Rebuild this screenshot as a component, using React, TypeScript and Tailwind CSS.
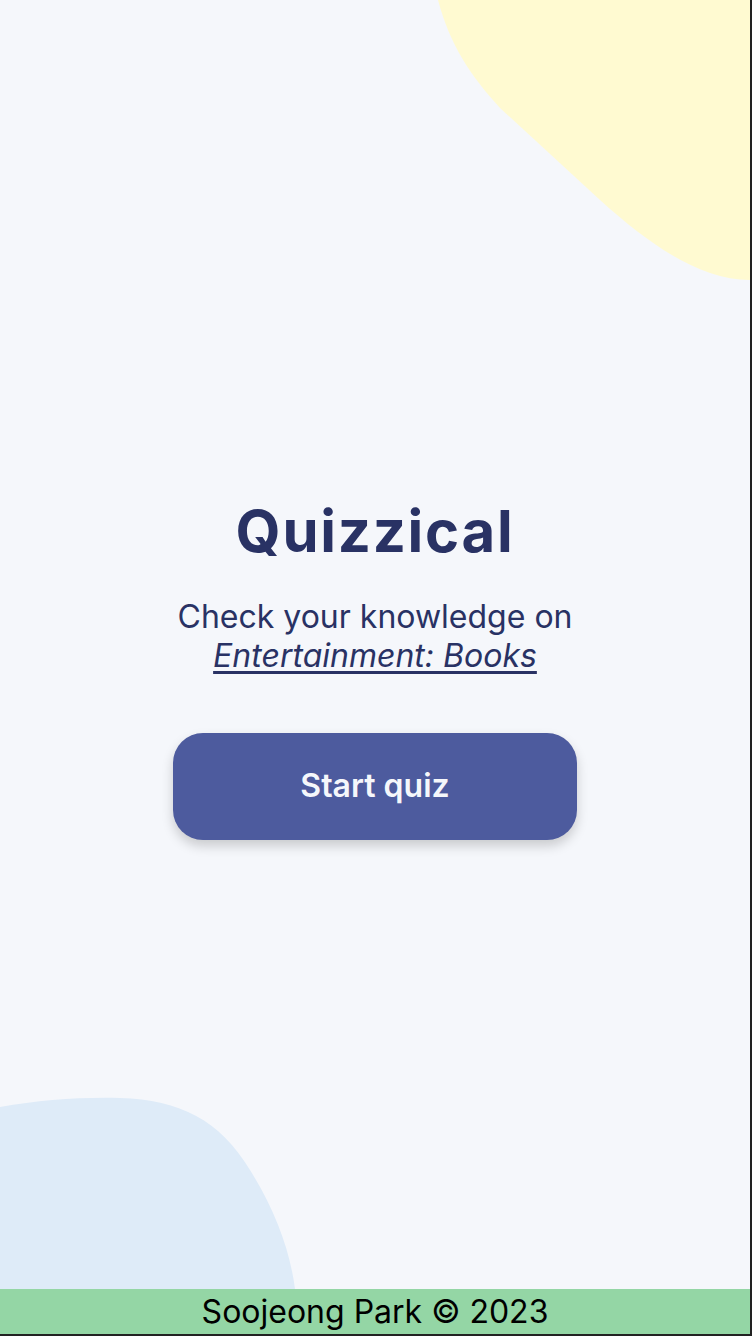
export default function App() {
  return (
    <div className="relative flex h-[1336px] w-[752px] flex-col overflow-hidden border-r-2 border-b-2 border-[#222222] bg-[#F5F7FB] font-['Inter',sans-serif]">
      {/* decorative blobs */}
      <svg
        className="pointer-events-none absolute left-0 top-0"
        width="750"
        height="1289"
        viewBox="0 0 750 1289"
      >
        <path
          d="M438 0 C450 45 470 75 500 108 L600 200 C650 245 700 280 750 280 L750 0 Z"
          fill="#FFFAD1"
        />
        <path
          d="M0 1107 C40 1100 80 1097 120 1098 C180 1100 220 1120 250 1170 C275 1210 290 1250 295 1289 L0 1289 Z"
          fill="#DEEBF8"
        />
      </svg>

      <main className="relative flex flex-1 flex-col items-center justify-center pt-[52px]">
        <h1 className="text-[58px] font-bold leading-none tracking-[0.03em] text-[#293264]">
          Quizzical
        </h1>
        <p className="mt-[37px] text-center text-[32px] leading-[39px] text-[#293264]">
          Check your knowledge on
          <br />
          <span className="italic underline underline-offset-[4px]">
            Entertainment: Books
          </span>
        </p>
        <button className="mt-[58px] h-[107px] w-[404px] rounded-[30px] bg-[#4D5B9E] text-[32px] font-semibold text-[#F5F7FB] shadow-[0_6px_12px_rgba(0,0,0,0.18)]">
          Start quiz
        </button>
      </main>

      <footer className="relative flex h-[45px] items-center justify-center bg-[#94D6A5] text-[32px] text-black">
        Soojeong Park © 2023
      </footer>
    </div>
  );
}
